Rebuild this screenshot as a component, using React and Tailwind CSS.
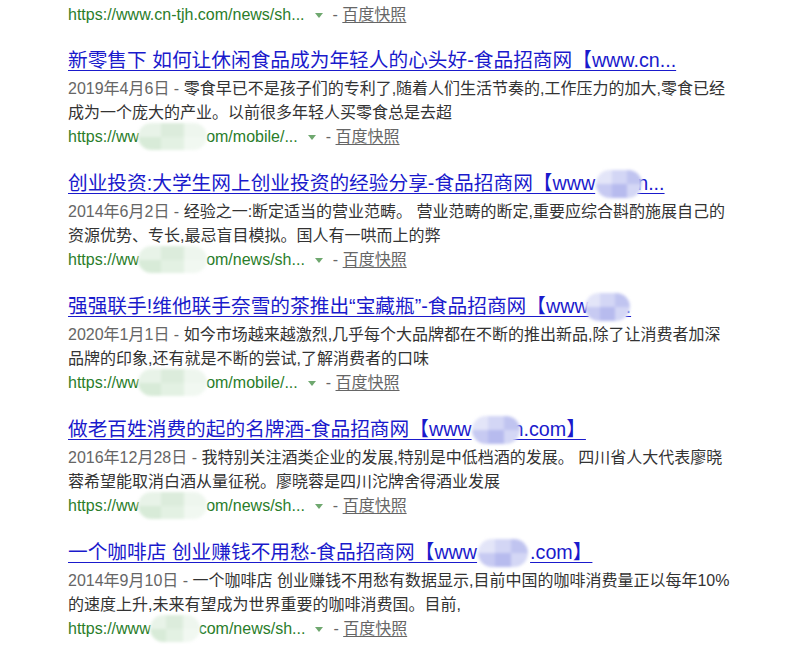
import React from 'react';

/* ── mosaic blur that hides part of a domain ── */
const TITLE_TONES = ['#e3e5f8', '#d3d6f5', '#c0c4f0', '#c7caf2', '#b7bbee', '#d4d7f5'];
const URL_TONES = ['#e8f3e8', '#dcecdc', '#eef6ee', '#d8ebd8', '#e3f1e3', '#f1f8f1'];

function Blob({ w, vw, left = 0, top, h, tones }) {
  return (
    <span className="relative inline-block h-0 align-baseline" style={{ width: w }}>
      <span
        className="absolute grid grid-cols-3 grid-rows-2 overflow-hidden rounded-[14px] blur-[1.5px]"
        style={{ left, top, width: vw, height: h }}
      >
        {tones.map((c, i) => (
          <span key={i} style={{ background: c }} />
        ))}
      </span>
    </span>
  );
}

const Caret = () => (
  <svg width="8" height="5" viewBox="0 0 8 5" className="inline-block mx-[10px] align-middle">
    <polygon points="0,0 8,0 4,5" fill="#6fa86f" />
  </svg>
);

function UrlLine({ before, blob, after }) {
  return (
    <div className="h-[24px] leading-[24px] text-[16px] whitespace-nowrap">
      <span className="text-[#2a7d2a]">
        {before}
        {blob && <Blob w={blob} vw={blob + 2} left={-1} top={-19} h={27} tones={URL_TONES} />}
        {after}
      </span>
      <Caret />
      <span className="text-[#666]">- </span>
      <a className="text-[#666] underline underline-offset-2">百度快照</a>
    </div>
  );
}

const RESULTS = [
  {
    title: ['新零售下 如何让休闲食品成为年轻人的心头好-食品招商网【www.cn...'],
    date: '2019年4月6日',
    lines: ['零食早已不是孩子们的专利了,随着人们生活节奏的,工作压力的加大,零食已经', '成为一个庞大的产业。以前很多年轻人买零食总是去超'],
    url: { before: 'https://ww', blob: 67, after: 'om/mobile/...' },
  },
  {
    title: ['创业投资:大学生网上创业投资的经验分享-食品招商网【www', 'n...'],
    tb: { w: 42, vw: 46, left: 1 },
    date: '2014年6月2日',
    lines: ['经验之一:断定适当的营业范畴。 营业范畴的断定,重要应综合斟酌施展自己的', '资源优势、专长,最忌盲目模拟。国人有一哄而上的弊'],
    url: { before: 'https://ww', blob: 67, after: 'om/news/sh...' },
  },
  {
    title: ['强强联手!维他联手奈雪的茶推出“宝藏瓶”-食品招商网【www', '.'],
    tb: { w: 37, vw: 45, left: -4 },
    date: '2020年1月1日',
    lines: ['如今市场越来越激烈,几乎每个大品牌都在不断的推出新品,除了让消费者加深', '品牌的印象,还有就是不断的尝试,了解消费者的口味'],
    url: { before: 'https://ww', blob: 67, after: 'om/mobile/...' },
  },
  {
    title: ['做老百姓消费的起的名牌酒-食品招商网【www', 'n.com】'],
    tb: { w: 41, vw: 48, left: 0 },
    date: '2016年12月28日',
    lines: ['我特别关注酒类企业的发展,特别是中低档酒的发展。 四川省人大代表廖晓', '蓉希望能取消白酒从量征税。廖晓蓉是四川沱牌舍得酒业发展'],
    url: { before: 'https://ww', blob: 67, after: 'om/news/sh...' },
  },
  {
    title: ['一个咖啡店 创业赚钱不用愁-食品招商网【www', '.com】'],
    tb: { w: 53, vw: 50, left: 1 },
    date: '2014年9月10日',
    lines: ['一个咖啡店 创业赚钱不用愁有数据显示,目前中国的咖啡消费量正以每年10%', '的速度上升,未来有望成为世界重要的咖啡消费国。目前,'],
    url: { before: 'https://www', blob: 48, after: 'com/news/sh...' },
  },
];

export default function App() {
  return (
    <div className="w-[800px] h-[645px] overflow-hidden bg-white pl-[68px] pt-[3px] font-['Liberation_Sans','Noto_Sans_CJK_SC',sans-serif]">
      <div className="mb-[14px]">
        <UrlLine before="https://www.cn-tjh.com/news/sh..." />
      </div>

      {RESULTS.map((r, i) => (
        <div key={i} className="mb-[15px]">
          <div className="h-[36px] pt-[2px] leading-[34px] whitespace-nowrap">
            <a className="text-[19.7px] text-[#1a1acc] underline decoration-1 underline-offset-[3px]">
              {r.title[0]}
              {r.tb && <Blob w={r.tb.w} vw={r.tb.vw} left={r.tb.left} top={-20} h={28} tones={TITLE_TONES} />}
              {r.title[1]}
            </a>
          </div>
          <div className="leading-[24px] text-[16px] text-[#333] whitespace-nowrap">
            <span className="text-[#666]">{r.date} - </span>
            {r.lines[0]}
            <br />
            {r.lines[1]}
          </div>
          <UrlLine {...r.url} />
        </div>
      ))}
    </div>
  );
}
